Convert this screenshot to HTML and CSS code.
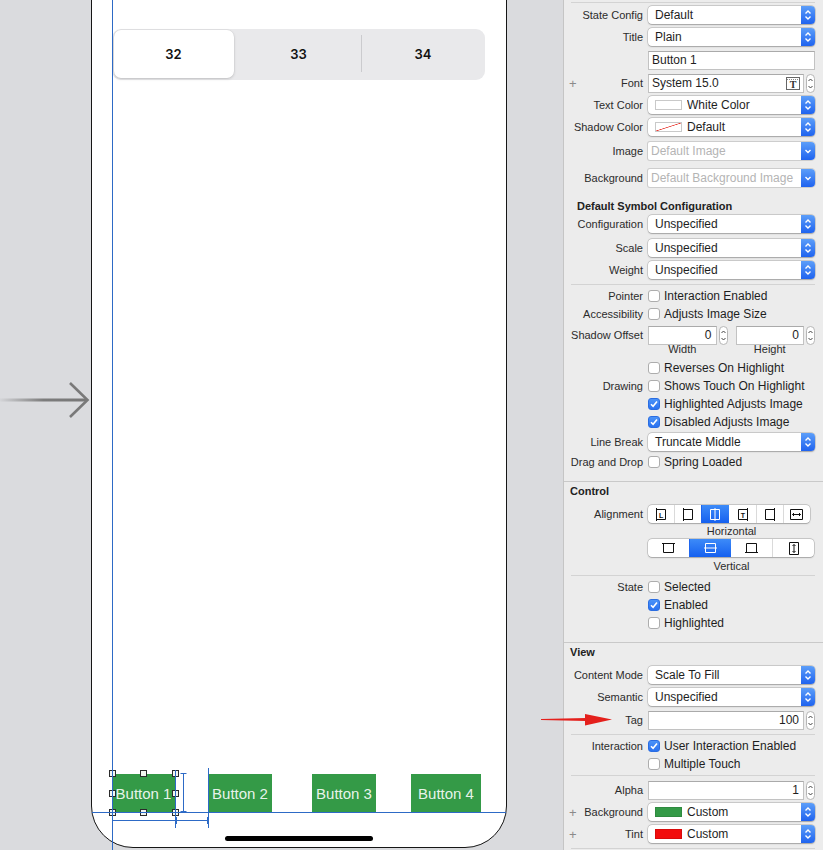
FILE: index.html
```html
<!DOCTYPE html>
<html>
<head>
<meta charset="utf-8">
<title>Inspector</title>
<link rel="stylesheet" href="styles.css">
</head>
<body>
<div class="app">
  <div class="canvas">
    <svg class="entry-arrow" width="92" height="40" viewBox="0 0 92 40">
      <defs>
        <linearGradient id="ag" x1="0" y1="0" x2="1" y2="0">
          <stop offset="0" stop-color="#d4d5d8"/>
          <stop offset="0.5" stop-color="#7c7c7c"/>
          <stop offset="1" stop-color="#777"/>
        </linearGradient>
      </defs>
      <rect x="0" y="18.5" width="87" height="3" fill="url(#ag)"/>
      <polyline points="70,3 87.5,20 70,37" fill="none" stroke="#797979" stroke-width="2.6"/>
    </svg>

    <div class="device">
      <div class="segmented">
        <div class="seg seg-on">32</div>
        <div class="seg">33</div>
        <div class="seg seg-div">34</div>
      </div>
      <div class="buttons">
        <div class="btn b1">Button 1
          <span class="h h-tl"></span><span class="h h-tm"></span><span class="h h-tr"></span>
          <span class="h h-ml"></span><span class="h h-mr"></span>
          <span class="h h-bl"></span><span class="h h-bm"></span><span class="h h-br"></span>
        </div>
        <div class="btn b2">Button 2</div>
        <div class="btn b3">Button 3</div>
        <div class="btn b4">Button 4</div>
      </div>
      <div class="home"></div>
    </div>

    <div class="guide guide-v"></div>
    <div class="guide guide-h"></div>
    <svg class="constraints" width="110" height="66" viewBox="0 0 110 66">
      <g stroke="#2d6ac6" stroke-width="1" fill="none">
        <path d="M70.5 5V63"/>
        <path d="M103.5 3V63"/>
        <path d="M78.5 8V47"/>
        <path d="M75.5 8.5H81.5"/>
        <path d="M75.5 46.5H81.5"/>
        <path d="M7.5 55.5H103"/>
        <path d="M7.5 52V59"/>
        <path d="M71.5 52V59"/>
        <path d="M102.5 52V59"/>
      </g>
    </svg>
  </div>

  <div class="inspector">
    <div class="sep"></div>

    <div class="row"><div class="lbl">State Config</div>
      <div class="popup"><span class="pv">Default</span><span class="pend"><svg width="14" height="18" viewBox="0 0 14 18"><path d="M4.5 7.5L7 5L9.5 7.5M4.5 10.5L7 13L9.5 10.5" fill="none" stroke="#fff" stroke-width="1.4"/></svg></span></div></div>

    <div class="row"><div class="lbl">Title</div>
      <div class="popup"><span class="pv">Plain</span><span class="pend"><svg width="14" height="18" viewBox="0 0 14 18"><path d="M4.5 7.5L7 5L9.5 7.5M4.5 10.5L7 13L9.5 10.5" fill="none" stroke="#fff" stroke-width="1.4"/></svg></span></div></div>

    <div class="row"><div class="lbl"></div>
      <div class="fs"><div class="field">Button 1</div></div></div>

    <div class="row"><div class="lbl"><span class="plus">+</span>Font</div>
      <div class="fs"><div class="field field-icon">System 15.0
        <svg class="ticon" width="14" height="13" viewBox="0 0 14 13"><rect x="0.5" y="0.5" width="13" height="12" fill="#fff" stroke="#666"/><path d="M1 2.5H13" stroke="#888" stroke-dasharray="1 1"/><text x="7" y="11.3" text-anchor="middle" font-family="Liberation Serif, serif" font-weight="bold" font-size="10" fill="#333">T</text></svg></div>
        <div class="stepper"><svg width="7" height="17" viewBox="0 0 7 17"><path d="M1.5 6L3.5 4L5.5 6M1.5 11L3.5 13L5.5 11" fill="none" stroke="#444"/></svg></div></div></div>

    <div class="row"><div class="lbl">Text Color</div>
      <div class="popup"><span class="sw sw-white"></span><span class="pv pv-np">White Color</span><span class="pend"><svg width="14" height="18" viewBox="0 0 14 18"><path d="M4.5 7.5L7 5L9.5 7.5M4.5 10.5L7 13L9.5 10.5" fill="none" stroke="#fff" stroke-width="1.4"/></svg></span></div></div>

    <div class="row"><div class="lbl">Shadow Color</div>
      <div class="popup"><span class="sw sw-none"></span><span class="pv pv-np">Default</span><span class="pend"><svg width="14" height="18" viewBox="0 0 14 18"><path d="M4.5 7.5L7 5L9.5 7.5M4.5 10.5L7 13L9.5 10.5" fill="none" stroke="#fff" stroke-width="1.4"/></svg></span></div></div>

    <div class="row"><div class="lbl">Image</div>
      <div class="popup popup-dis"><span class="pv">Default Image</span><span class="pend"><svg width="14" height="18" viewBox="0 0 14 18"><path d="M4.5 8L7 10.5L9.5 8" fill="none" stroke="#fff" stroke-width="1.4"/></svg></span></div></div>

    <div class="row"><div class="lbl">Background</div>
      <div class="popup popup-dis"><span class="pv">Default Background Image</span><span class="pend"><svg width="14" height="18" viewBox="0 0 14 18"><path d="M4.5 8L7 10.5L9.5 8" fill="none" stroke="#fff" stroke-width="1.4"/></svg></span></div></div>

    <div class="hdr hdr-sub">Default Symbol Configuration</div>

    <div class="row"><div class="lbl">Configuration</div>
      <div class="popup"><span class="pv">Unspecified</span><span class="pend"><svg width="14" height="18" viewBox="0 0 14 18"><path d="M4.5 7.5L7 5L9.5 7.5M4.5 10.5L7 13L9.5 10.5" fill="none" stroke="#fff" stroke-width="1.4"/></svg></span></div></div>

    <div class="row"><div class="lbl">Scale</div>
      <div class="popup"><span class="pv">Unspecified</span><span class="pend"><svg width="14" height="18" viewBox="0 0 14 18"><path d="M4.5 7.5L7 5L9.5 7.5M4.5 10.5L7 13L9.5 10.5" fill="none" stroke="#fff" stroke-width="1.4"/></svg></span></div></div>

    <div class="row"><div class="lbl">Weight</div>
      <div class="popup"><span class="pv">Unspecified</span><span class="pend"><svg width="14" height="18" viewBox="0 0 14 18"><path d="M4.5 7.5L7 5L9.5 7.5M4.5 10.5L7 13L9.5 10.5" fill="none" stroke="#fff" stroke-width="1.4"/></svg></span></div></div>

    <div class="sep"></div>

    <div class="row"><div class="lbl">Pointer</div>
      <div class="cb"><span class="chk"></span>Interaction Enabled</div></div>

    <div class="row"><div class="lbl">Accessibility</div>
      <div class="cb"><span class="chk"></span>Adjusts Image Size</div></div>

    <div class="row"><div class="lbl">Shadow Offset</div>
      <div class="pair">
        <div class="grp"><div class="field field-num">0</div><div class="stepper"><svg width="7" height="17" viewBox="0 0 7 17"><path d="M1.5 6L3.5 4L5.5 6M1.5 11L3.5 13L5.5 11" fill="none" stroke="#444"/></svg></div></div>
        <div class="grp"><div class="field field-num">0</div><div class="stepper"><svg width="7" height="17" viewBox="0 0 7 17"><path d="M1.5 6L3.5 4L5.5 6M1.5 11L3.5 13L5.5 11" fill="none" stroke="#444"/></svg></div></div>
      </div></div>

    <div class="row"><div class="lbl"></div>
      <div class="pair caps"><span>Width</span><span>Height</span></div></div>

    <div class="row"><div class="lbl"></div>
      <div class="cb"><span class="chk"></span>Reverses On Highlight</div></div>

    <div class="row"><div class="lbl">Drawing</div>
      <div class="cb"><span class="chk"></span>Shows Touch On Highlight</div></div>

    <div class="row"><div class="lbl"></div>
      <div class="cb"><span class="chk chk-on"><svg width="10" height="10" viewBox="0 0 10 10"><path d="M2 5.2L4.1 7.3L8 2.6" fill="none" stroke="#fff" stroke-width="1.6"/></svg></span>Highlighted Adjusts Image</div></div>

    <div class="row"><div class="lbl"></div>
      <div class="cb"><span class="chk chk-on"><svg width="10" height="10" viewBox="0 0 10 10"><path d="M2 5.2L4.1 7.3L8 2.6" fill="none" stroke="#fff" stroke-width="1.6"/></svg></span>Disabled Adjusts Image</div></div>

    <div class="row"><div class="lbl">Line Break</div>
      <div class="popup"><span class="pv">Truncate Middle</span><span class="pend"><svg width="14" height="18" viewBox="0 0 14 18"><path d="M4.5 7.5L7 5L9.5 7.5M4.5 10.5L7 13L9.5 10.5" fill="none" stroke="#fff" stroke-width="1.4"/></svg></span></div></div>

    <div class="row"><div class="lbl">Drag and Drop</div>
      <div class="cb"><span class="chk"></span>Spring Loaded</div></div>

    <div class="sep sep-full"></div>

    <div class="hdr">Control</div>

    <div class="row"><div class="lbl">Alignment</div>
      <div class="aseg">
        <span><svg width="12" height="13" viewBox="0 0 12 13"><path d="M1.5 0V13M1.5 1.5H10.5V11.5H1.5" fill="none" stroke="currentColor"/><text x="6.2" y="9.6" text-anchor="middle" font-family="Liberation Sans, sans-serif" font-weight="bold" font-size="7" fill="currentColor">L</text></svg></span>
        <span><svg width="12" height="13" viewBox="0 0 12 13"><path d="M1.5 0V13M1.5 1.5H10.5V11.5H1.5" fill="none" stroke="currentColor"/></svg></span>
        <span class="on"><svg width="12" height="13" viewBox="0 0 12 13"><path d="M6 0V13M1.5 1.5H10.5V11.5H1.5Z" fill="none" stroke="currentColor"/></svg></span>
        <span><svg width="12" height="13" viewBox="0 0 12 13"><path d="M10.5 0V13M10.5 1.5H1.5V11.5H10.5" fill="none" stroke="currentColor"/><text x="6" y="9.6" text-anchor="middle" font-family="Liberation Sans, sans-serif" font-weight="bold" font-size="7" fill="currentColor">T</text></svg></span>
        <span><svg width="12" height="13" viewBox="0 0 12 13"><path d="M10.5 0V13M10.5 1.5H1.5V11.5H10.5" fill="none" stroke="currentColor"/></svg></span>
        <span><svg width="13" height="13" viewBox="0 0 13 13"><path d="M0.5 1.5H12.5V11.5H0.5Z M2.5 6.5H10.5 M4 5L2.5 6.5L4 8 M9 5L10.5 6.5L9 8" fill="none" stroke="currentColor"/></svg></span>
      </div></div>

    <div class="row"><div class="lbl"></div><div class="cap">Horizontal</div></div>

    <div class="row"><div class="lbl"></div>
      <div class="aseg vseg">
        <span><svg width="13" height="12" viewBox="0 0 13 12"><path d="M0 1.5H13M1.5 1.5V10.5H11.5V1.5" fill="none" stroke="currentColor"/></svg></span>
        <span class="on"><svg width="13" height="12" viewBox="0 0 13 12"><path d="M0 6H13M1.5 1.5H11.5V10.5H1.5Z" fill="none" stroke="currentColor"/></svg></span>
        <span><svg width="13" height="12" viewBox="0 0 13 12"><path d="M0 10.5H13M1.5 10.5V1.5H11.5V10.5" fill="none" stroke="currentColor"/></svg></span>
        <span><svg width="12" height="13" viewBox="0 0 12 13"><path d="M1.5 0.5H10.5V12.5H1.5Z M6 2.5V10.5 M4.5 4L6 2.5L7.5 4 M4.5 9L6 10.5L7.5 9" fill="none" stroke="currentColor"/></svg></span>
      </div></div>

    <div class="row"><div class="lbl"></div><div class="cap">Vertical</div></div>

    <div class="sep"></div>

    <div class="row"><div class="lbl">State</div>
      <div class="cb"><span class="chk"></span>Selected</div></div>

    <div class="row"><div class="lbl"></div>
      <div class="cb"><span class="chk chk-on"><svg width="10" height="10" viewBox="0 0 10 10"><path d="M2 5.2L4.1 7.3L8 2.6" fill="none" stroke="#fff" stroke-width="1.6"/></svg></span>Enabled</div></div>

    <div class="row"><div class="lbl"></div>
      <div class="cb"><span class="chk"></span>Highlighted</div></div>

    <div class="sep sep-full"></div>

    <div class="hdr">View</div>

    <div class="row"><div class="lbl">Content Mode</div>
      <div class="popup"><span class="pv">Scale To Fill</span><span class="pend"><svg width="14" height="18" viewBox="0 0 14 18"><path d="M4.5 7.5L7 5L9.5 7.5M4.5 10.5L7 13L9.5 10.5" fill="none" stroke="#fff" stroke-width="1.4"/></svg></span></div></div>

    <div class="row"><div class="lbl">Semantic</div>
      <div class="popup"><span class="pv">Unspecified</span><span class="pend"><svg width="14" height="18" viewBox="0 0 14 18"><path d="M4.5 7.5L7 5L9.5 7.5M4.5 10.5L7 13L9.5 10.5" fill="none" stroke="#fff" stroke-width="1.4"/></svg></span></div></div>

    <div class="row"><div class="lbl">Tag</div>
      <div class="fs"><div class="field field-num">100</div>
        <div class="stepper"><svg width="7" height="17" viewBox="0 0 7 17"><path d="M1.5 6L3.5 4L5.5 6M1.5 11L3.5 13L5.5 11" fill="none" stroke="#444"/></svg></div></div></div>

    <div class="sep"></div>

    <div class="row"><div class="lbl">Interaction</div>
      <div class="cb"><span class="chk chk-on"><svg width="10" height="10" viewBox="0 0 10 10"><path d="M2 5.2L4.1 7.3L8 2.6" fill="none" stroke="#fff" stroke-width="1.6"/></svg></span>User Interaction Enabled</div></div>

    <div class="row"><div class="lbl"></div>
      <div class="cb"><span class="chk"></span>Multiple Touch</div></div>

    <div class="sep"></div>

    <div class="row"><div class="lbl">Alpha</div>
      <div class="fs"><div class="field field-num">1</div>
        <div class="stepper"><svg width="7" height="17" viewBox="0 0 7 17"><path d="M1.5 6L3.5 4L5.5 6M1.5 11L3.5 13L5.5 11" fill="none" stroke="#444"/></svg></div></div></div>

    <div class="row"><div class="lbl"><span class="plus">+</span>Background</div>
      <div class="popup"><span class="sw sw-green"></span><span class="pv pv-np">Custom</span><span class="pend"><svg width="14" height="18" viewBox="0 0 14 18"><path d="M4.5 7.5L7 5L9.5 7.5M4.5 10.5L7 13L9.5 10.5" fill="none" stroke="#fff" stroke-width="1.4"/></svg></span></div></div>

    <div class="row"><div class="lbl"><span class="plus">+</span>Tint</div>
      <div class="popup"><span class="sw sw-red"></span><span class="pv pv-np">Custom</span><span class="pend"><svg width="14" height="18" viewBox="0 0 14 18"><path d="M4.5 7.5L7 5L9.5 7.5M4.5 10.5L7 13L9.5 10.5" fill="none" stroke="#fff" stroke-width="1.4"/></svg></span></div></div>

    <div class="sep"></div>
  </div>

  <svg class="red-arrow" width="74" height="18" viewBox="0 0 74 18">
    <polygon points="1,7.9 46,7 46,10 1,9.1" fill="#e4201c"/>
    <polygon points="45,3 72,8.6 45,14.5" fill="#e4201c"/>
  </svg>
</div>
</body>
</html>
```

FILE: styles.css
```css
* { box-sizing: border-box; }
html, body { margin: 0; padding: 0; }
body {
  width: 823px;
  height: 850px;
  overflow: hidden;
  font-family: "Liberation Sans", Arial, sans-serif;
  background: #dadbde;
}

.app {
  display: flex;
  height: 850px;
  position: relative;
}

/* ---------- canvas ---------- */
.canvas {
  width: 563px;
  flex: none;
  height: 850px;
  background: #dadbde;
  position: relative;
  overflow: hidden;
}

.entry-arrow {
  position: absolute;
  left: 0;
  top: 380px;
}

.device {
  width: 416px;
  height: 908px;
  margin: -60px 0 0 91px;
  background: #fff;
  border: 1.5px solid #161616;
  border-radius: 0 0 42px 42px;
  display: flex;
  flex-direction: column;
}

.segmented {
  margin: 87.5px 0 0 20px;
  width: 373px;
  height: 51px;
  background: #e9e9eb;
  border-radius: 9px;
  padding: 1.5px 0 1.5px 1.5px;
  display: grid;
  grid-template-columns: 123px 1fr 1fr;
}

.seg {
  display: flex;
  align-items: center;
  justify-content: center;
  font-family: Inter, "Liberation Sans", sans-serif;
  font-weight: 600;
  font-size: 13px;
  color: #111;
  position: relative;
}

.seg-on {
  background: #fff;
  border-radius: 7px;
  margin-right: 3px;
  box-shadow: 0 1px 3px rgba(0, 0, 0, 0.16), 0 0 0 0.5px rgba(0, 0, 0, 0.05);
}

.seg-div::before {
  content: "";
  position: absolute;
  left: 0;
  top: 5px;
  bottom: 6px;
  width: 1px;
  background: #cbcbce;
}

.buttons {
  margin: auto 0 0 20px;
  display: flex;
  height: 39px;
}

.btn {
  background: #349a47;
  color: rgba(255, 255, 255, 0.9);
  font-size: 15px;
  display: flex;
  align-items: center;
  justify-content: center;
  flex: none;
  position: relative;
}

.b1 { width: 63px; }
.b2 { width: 64px; margin-left: 33px; }
.b3 { width: 64px; margin-left: 40px; }
.b4 { width: 70px; margin-left: 35px; }

.h {
  position: absolute;
  width: 7px;
  height: 7px;
  background: #f2f6f0;
  border: 1px solid #2b2b2b;
}
.h-tl { left: -3.5px; top: -3.5px; }
.h-tm { left: 27.5px; top: -3.5px; }
.h-tr { right: -3.5px; top: -3.5px; }
.h-ml { left: -3.5px; top: 16.5px; }
.h-mr { right: -3.5px; top: 16.5px; }
.h-bl { left: -3.5px; bottom: -3.5px; }
.h-bm { left: 27.5px; bottom: -3.5px; }
.h-br { right: -3.5px; bottom: -3.5px; }

.home {
  width: 148px;
  height: 5px;
  background: #000;
  border-radius: 3px;
  margin: 23px auto 6.5px;
}

.guide {
  position: absolute;
  background: #2d6ac6;
}
.guide-v { left: 112px; top: 0; width: 1px; height: 850px; }
.guide-h { left: 92px; top: 812px; width: 414px; height: 1px; }

.constraints {
  position: absolute;
  left: 105px;
  top: 765px;
}

/* ---------- inspector ---------- */
.inspector {
  width: 260px;
  flex: none;
  height: 850px;
  background: #ececec;
  border-left: 1px solid #c5c5c5;
  padding-top: 2px;
  display: grid;
  align-items: start;
  align-content: start;
  grid-template-rows:
    4px 22px 23px 23px 22px 22px 24px 27px 28px 18px 24px 22px 23px
    3px 18px 21px 14px 19px 18px 18px 18px 20px 20px 28px
    1px 23px 17px 17px 18px 18px
    3px 18px 18px 28px
    1px 23px 22px 23px 23px
    3px 18px 20px
    6px 22px 22px 23px 2px;
  font-size: 11px;
  color: #2b2b2b;
  overflow: hidden;
}

.sep {
  height: 1px;
  background: #d3d3d3;
  margin: 0 8px 0 7px;
}
.sep-full {
  margin: 0;
  background: #c9c9c9;
}

.row {
  display: flex;
  align-items: center;
  height: 18px;
  gap: 5px;
}

.lbl {
  width: 79px;
  flex: none;
  display: flex;
  justify-content: flex-end;
  align-items: center;
  white-space: nowrap;
}

.plus {
  margin-right: auto;
  padding-left: 5px;
  color: #8a8a8a;
  font-size: 13px;
  line-height: 1;
}

.hdr {
  height: 18px;
  line-height: 18px;
  font-weight: bold;
  color: #222;
  padding-left: 6px;
}
.hdr-sub { padding-left: 13px; }

.popup {
  width: 167px;
  height: 18px;
  background: #fff;
  border-radius: 4px;
  box-shadow: 0 0 0 0.5px rgba(0, 0, 0, 0.22), 0 0.5px 1.5px rgba(0, 0, 0, 0.22);
  display: flex;
  align-items: center;
  font-size: 12px;
  color: #1e1e1e;
}

.pv {
  flex: 1;
  padding-left: 7px;
  white-space: nowrap;
  overflow: hidden;
}
.pv-np { padding-left: 0; }

.pend {
  width: 14px;
  height: 18px;
  flex: none;
  background: linear-gradient(#5c9ef9, #1f63ef);
  border-radius: 0 4px 4px 0;
  display: flex;
}

.popup-dis {
  border-radius: 2px 4px 4px 2px;
  box-shadow: 0 0 0 1px #cdcdcd;
}
.popup-dis .pv {
  padding-left: 3px;
  color: #b4b4b4;
}

.sw {
  width: 27px;
  height: 10px;
  flex: none;
  margin: 0 5px 0 7px;
  border: 1px solid #c9c9c9;
  background: #fff;
}
.sw-none {
  background: linear-gradient(to bottom right, transparent calc(50% - 0.7px), #e8332b 50%, transparent calc(50% + 0.7px)), #fff;
}
.sw-green { background: #349a47; border-color: #2f8a40; }
.sw-red { background: #f20d0d; border-color: #d80b0b; }

.fs {
  width: 167px;
  display: flex;
  gap: 2px;
  align-items: center;
}

.field {
  flex: 1;
  height: 19px;
  background: #fff;
  border: 1px solid #c2c2c2;
  border-top-color: #aaaaaa;
  font-size: 12px;
  color: #1e1e1e;
  padding: 0 3px;
  display: flex;
  align-items: center;
  white-space: nowrap;
  min-width: 0;
}
.field-num {
  justify-content: flex-end;
  padding-right: 4px;
}
.field-icon { justify-content: space-between; padding-right: 3px; }
.ticon { flex: none; }

.stepper {
  width: 9px;
  height: 19px;
  flex: none;
  background: #fff;
  border: 1px solid #b6b6b6;
  border-radius: 5px;
  display: flex;
}

.pair {
  width: 167px;
  display: flex;
  gap: 8px;
}
.grp {
  flex: 1;
  display: flex;
  gap: 2px;
  min-width: 0;
}
.caps span {
  flex: 1;
  text-align: center;
  padding-right: 11px;
  color: #2b2b2b;
}

.cb {
  display: flex;
  align-items: center;
  gap: 4px;
  font-size: 12px;
  color: #1e1e1e;
  white-space: nowrap;
}

.chk {
  width: 12px;
  height: 12px;
  flex: none;
  background: #fff;
  border: 1px solid #adadad;
  border-radius: 3px;
  display: flex;
  align-items: center;
  justify-content: center;
}
.chk-on {
  background: linear-gradient(#4b93f8, #2a72f0);
  border-color: #2a6de2;
}

.aseg {
  width: 162px;
  height: 18px;
  background: #fff;
  border-radius: 4px;
  box-shadow: 0 0 0 0.5px rgba(0, 0, 0, 0.25), 0 0.5px 1.5px rgba(0, 0, 0, 0.2);
  display: flex;
  overflow: hidden;
  color: #111;
}
.aseg span {
  flex: 1;
  display: flex;
  align-items: center;
  justify-content: center;
  border-left: 1px solid #dadada;
}
.aseg span:first-child { border-left: none; }
.aseg span.on {
  background: linear-gradient(#3d8bf8, #1560ef);
  color: #fff;
  border-left-color: #1f66ee;
}
.aseg span.on + span { border-left-color: transparent; }
.vseg { width: 166px; }

.cap {
  width: 167px;
  text-align: center;
  color: #2b2b2b;
}

.red-arrow {
  position: absolute;
  left: 540px;
  top: 711px;
}
```
